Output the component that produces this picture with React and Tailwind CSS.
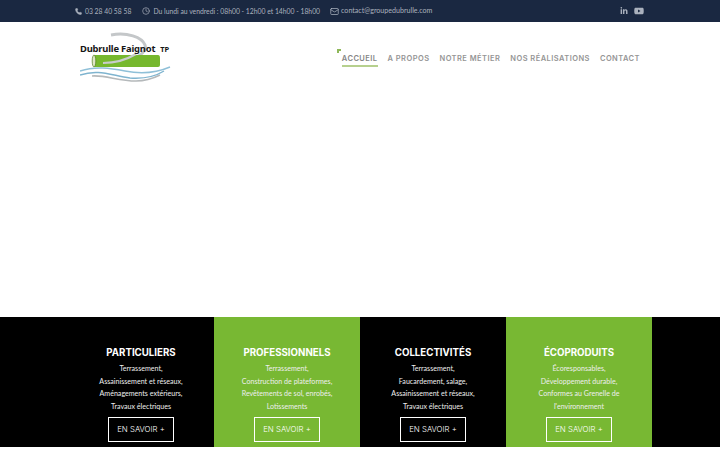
import { Phone, Clock, Mail } from 'lucide-react';
import { FaLinkedinIn, FaYoutube } from 'react-icons/fa';

const CARDS = [
  { title: 'PARTICULIERS', lines: ['Terrassement,', 'Assainissement et réseaux,', 'Aménagements extérieurs,', 'Travaux électriques'], green: false },
  { title: 'PROFESSIONNELS', lines: ['Terrassement,', 'Construction de plateformes,', 'Revêtements de sol, enrobés,', 'Lotissements'], green: true },
  { title: 'COLLECTIVITÉS', lines: ['Terrassement,', 'Faucardement, salage,', 'Assainissement et réseaux,', 'Travaux électriques'], green: false },
  { title: 'ÉCOPRODUITS', lines: ['Écoresponsables,', 'Développement durable,', 'Conformes au Grenelle de', "l'environnement"], green: true },
];

const NAV = ['A PROPOS', 'NOTRE MÉTIER', 'NOS RÉALISATIONS', 'CONTACT'];

function Logo() {
  return (
    <div className="relative h-[50px] w-[92px]">
      <svg width="92" height="50" viewBox="0 0 92 50" className="absolute left-0 top-0">
        <path d="M31 3 C47 0 62 5 65 13 C67 19 60 24 52 28" fill="none" stroke="#c4c7c9" strokeWidth="3" />
        <path d="M14 23 L78 23 Q80 23 80 26 L80 33 Q80 35 78 35 L14 35 Z" fill="#76b82e" />
        <ellipse cx="14" cy="29" rx="1.8" ry="6" fill="#dfe6c8" stroke="#4d7d1a" strokeWidth="0.7" />
        <path d="M23 31 C34 31 46 28 56 22" fill="none" stroke="#c8cdcb" strokeWidth="2.2" />
        <path d="M0 39 C15 34 30 36 45 39 C60 42 76 41 90 35" fill="none" stroke="#8fc0d8" strokeWidth="1.4" />
        <path d="M0 43 C18 37 30 43 50 46 C64 47 76 44 84 39" fill="none" stroke="#7fb4cf" strokeWidth="1.4" />
        <path d="M12 44 C26 43 38 49 56 49 C66 49 74 46 80 43" fill="none" stroke="#b5b9bb" strokeWidth="1.6" />
      </svg>
      <div className="absolute left-0 top-[11px] whitespace-nowrap font-['Noto_Sans',sans-serif] text-[9.4px] font-bold leading-[12px] tracking-[-0.02em] text-[#151515]">
        Dubrulle Faignot<span className="ml-[5px] text-[7.5px]">TP</span>
      </div>
    </div>
  );
}

function Card({ card }) {
  return (
    <div className={`flex h-full flex-col items-center pt-[28px] ${card.green ? 'bg-[#78b833]' : 'bg-black'}`}>
      <h3 className="font-['Inter',sans-serif] text-[9.7px] font-bold leading-[16px] text-white">{card.title}</h3>
      <div className="mt-[2px] text-center text-[7.1px] leading-[12.6px] text-[#eeeeee]">
        {card.lines.map((line) => (
          <p key={line}>{line}</p>
        ))}
      </div>
      <div className="mt-[4px] flex h-[25px] w-[66px] items-center justify-center border-[1.5px] border-white font-['Inter',sans-serif] text-[7.8px] font-light text-white">
        EN SAVOIR +
      </div>
    </div>
  );
}

export default function App() {
  return (
    <div className="flex h-[450px] w-[720px] flex-col overflow-hidden bg-white font-['Lato',sans-serif]">
      <div className="flex h-[22px] shrink-0 items-center bg-[#1a2841] pl-[75px] pr-[76px] text-[6.8px] text-[#aab1bd]">
        <Phone size={7} className="mr-[3px] fill-[#aab1bd]" />
        <span>03 28 40 58 58</span>
        <Clock size={8} className="ml-[11px] mr-[3px]" />
        <span>Du lundi au vendredi : 08h00 - 12h00 et 14h00 - 18h00</span>
        <Mail size={9} className="ml-[10px] mr-[2px]" />
        <span className="text-[7.1px]">contact@groupedubrulle.com</span>
        <div className="ml-auto flex items-center gap-[6px]">
          <FaLinkedinIn size={8} />
          <FaYoutube size={10} />
        </div>
      </div>

      <div className="flex h-[295px] shrink-0 items-start bg-white pl-[80px] pr-[80px]">
        <div className="mt-[10px]">
          <Logo />
        </div>
        <nav className="ml-auto mt-[31px] flex items-start gap-[10px] font-['Inter',sans-serif] text-[7.5px] font-semibold tracking-[0.06em] text-[#959595]">
          <div className="relative border-b-2 border-[#b6d08e] pb-[1px] leading-[11px] text-[#858585]">
            <span className="absolute left-[-5px] top-[-4px] h-[4px] w-[4px] border-l-2 border-t-2 border-[#8fb85a]" />
            ACCUEIL
          </div>
          {NAV.map((item) => (
            <div key={item} className="leading-[11px]">{item}</div>
          ))}
        </nav>
      </div>

      <div className="grid h-[130px] shrink-0 grid-cols-4 bg-black pl-[68px] pr-[68px]">
        {CARDS.map((card) => (
          <Card key={card.title} card={card} />
        ))}
      </div>
    </div>
  );
}
